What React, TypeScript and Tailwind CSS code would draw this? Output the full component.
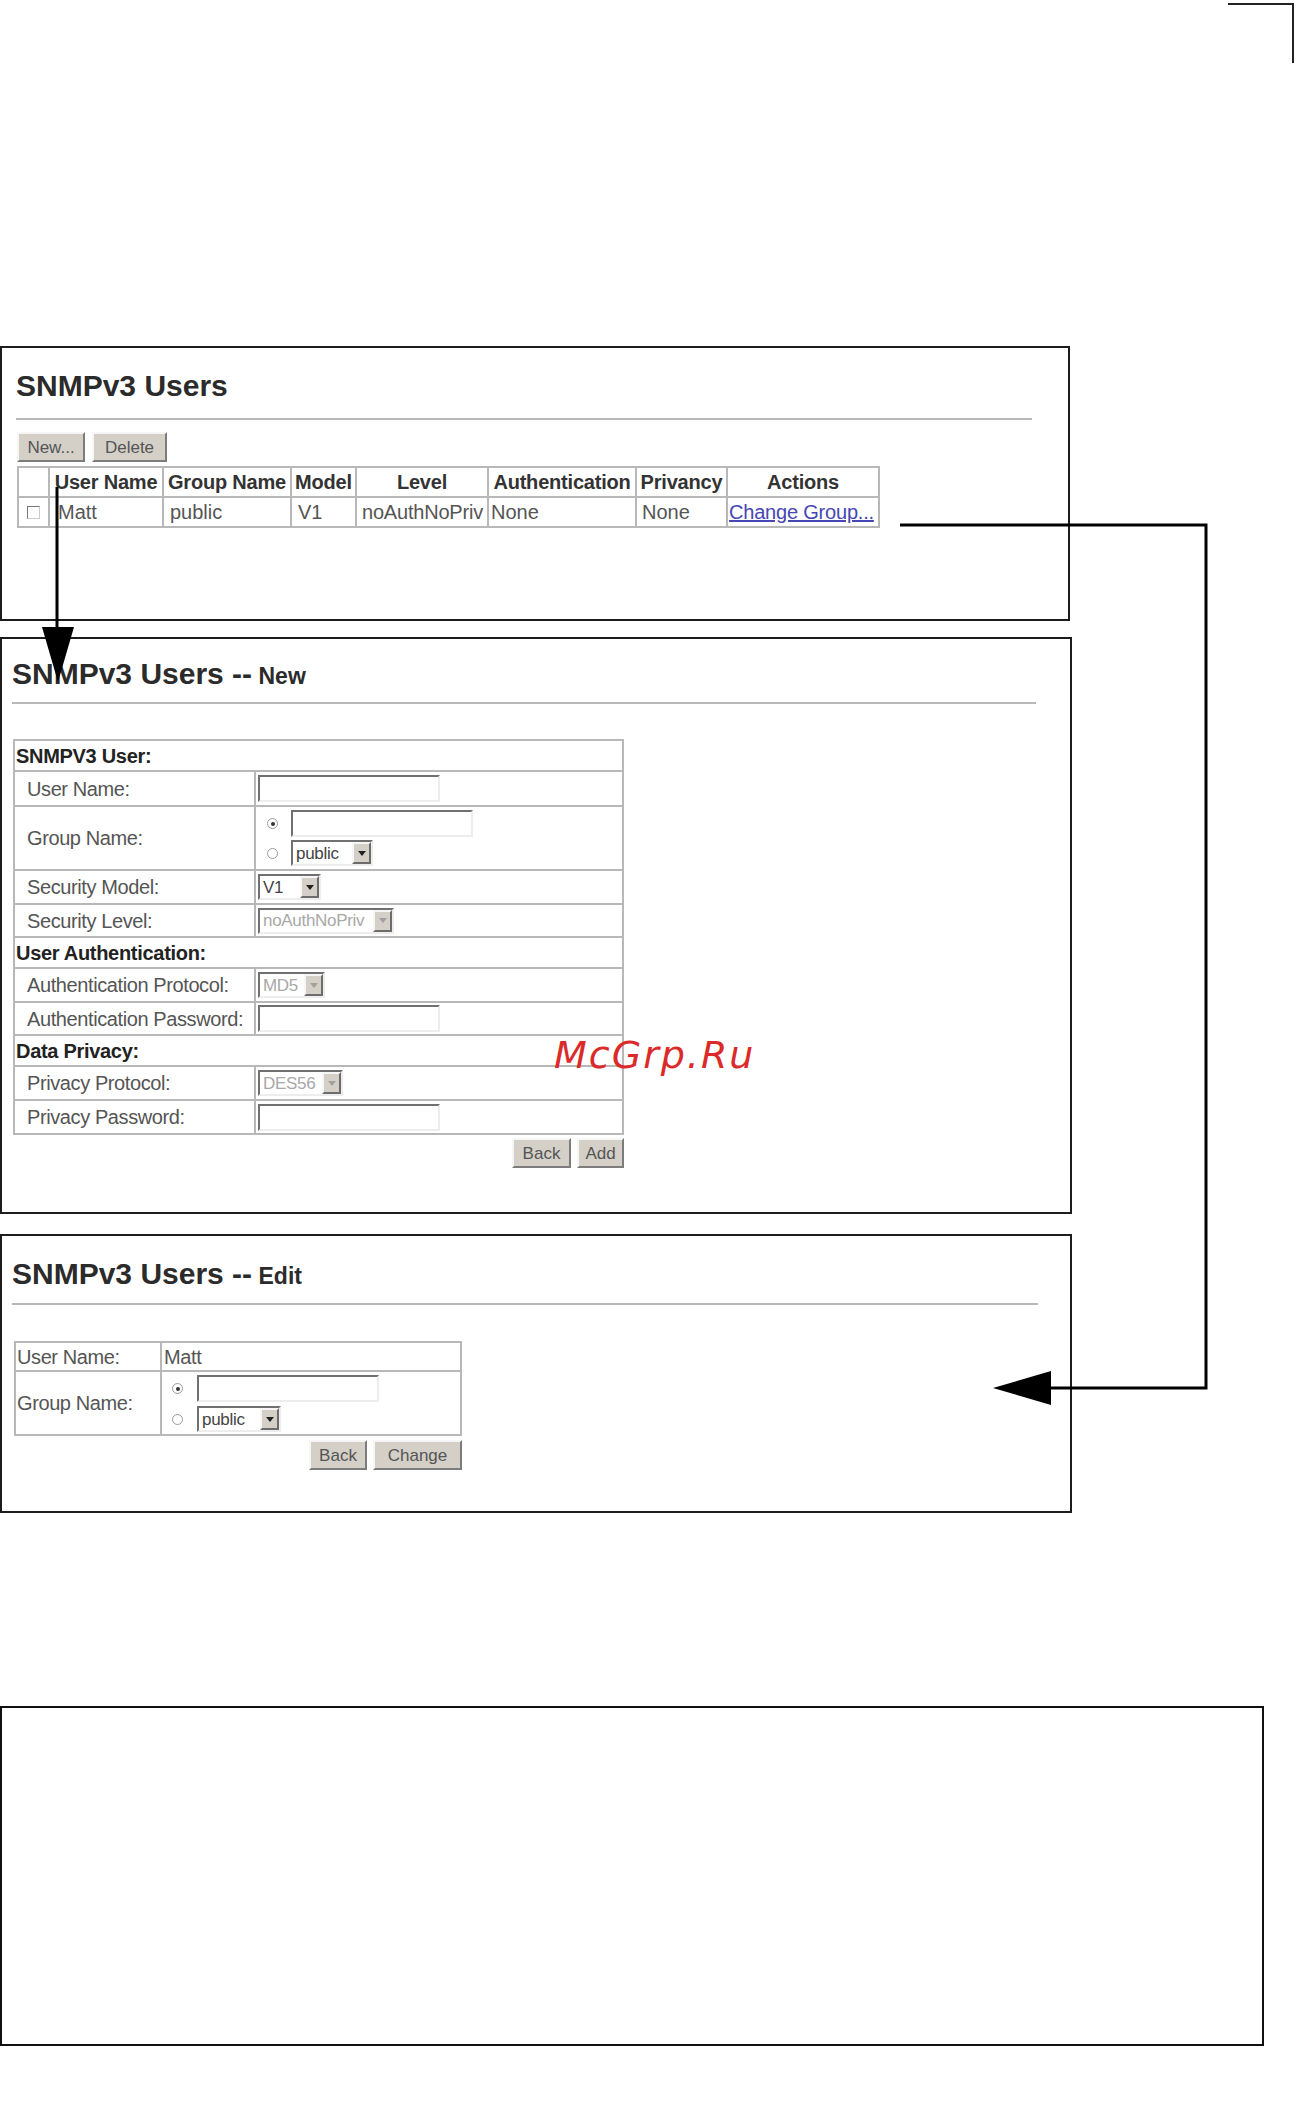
import React from 'react';

const LABEL = "text-[20px] text-[#555] tracking-[-0.4px] leading-none";
const SECTION = "text-[20px] font-bold text-[#222] tracking-[-0.3px] leading-none";

function Btn({ label, className }: { label: string; className: string }) {
  return (
    <div
      className={`${className} h-[30px] flex items-center justify-center bg-[#d4d0c8] border-2 border-t-[#f6f6f6] border-l-[#f6f6f6] border-b-[#7c7c7c] border-r-[#7c7c7c] text-[17px] text-[#555] leading-none`}
    >
      {label}
    </div>
  );
}

function TextBox() {
  return (
    <div className="w-[182px] h-[27px] bg-white border-2 border-t-[#707070] border-l-[#707070] border-b-[#ededed] border-r-[#ededed]" />
  );
}

function Select({ value, className, disabled }: { value: string; className: string; disabled?: boolean }) {
  return (
    <div
      className={`${className} h-[26px] flex bg-white border-2 border-t-[#707070] border-l-[#707070] border-b-[#ededed] border-r-[#ededed]`}
    >
      <span
        className={`flex-1 flex items-center pl-[3px] text-[17px] leading-none tracking-[-0.3px] ${disabled ? 'text-[#a8a8a8]' : 'text-[#444]'}`}
      >
        {value}
      </span>
      <span className="w-[19px] h-full flex items-center justify-center bg-[#d4d0c8] border-2 border-t-[#f6f6f6] border-l-[#f6f6f6] border-b-[#6c6c6c] border-r-[#6c6c6c]">
        <svg width="8" height="5" viewBox="0 0 8 5">
          <path d="M0 0 L8 0 L4 5 Z" fill={disabled ? '#a0a0a0' : '#222'} />
        </svg>
      </span>
    </div>
  );
}

function Radio({ checked }: { checked?: boolean }) {
  return (
    <span className="w-[11px] h-[11px] rounded-full border border-[#9a9a9a] bg-white flex items-center justify-center shrink-0">
      {checked && <span className="w-[4px] h-[4px] rounded-full bg-[#333]" />}
    </span>
  );
}

function Title({ sub }: { sub?: string }) {
  return (
    <div className="h-[30px] leading-[30px] whitespace-nowrap text-[#2b2b2b] font-bold">
      <span className="text-[30px]">SNMPv3 Users{sub ? ' --' : ''}</span>
      {sub && <span className="text-[23px]"> {sub}</span>}
    </div>
  );
}

function FormRow({ label, h, children }: { label: string; h: string; children: React.ReactNode }) {
  return (
    <div className={`${h} flex border-t-2 border-[#b8b8b8]`}>
      <div className={`w-[241px] shrink-0 border-r-2 border-[#b8b8b8] flex items-center pl-[12px] ${LABEL}`}>{label}</div>
      <div className="flex-1 flex items-center pl-[2px]">{children}</div>
    </div>
  );
}

function SectionRow({ label, h, first }: { label: string; h: string; first?: boolean }) {
  return (
    <div className={`${h} flex items-center pl-[1px] ${first ? '' : 'border-t-2 border-[#b8b8b8]'} ${SECTION}`}>{label}</div>
  );
}

const cols = ['w-[29px]', 'w-[114px]', 'w-[128px]', 'w-[65px]', 'w-[132px]', 'w-[148px]', 'w-[91px]', 'w-[152px]'];
const heads = ['', 'User Name', 'Group Name', 'Model', 'Level', 'Authentication', 'Privancy', 'Actions'];

function UsersTable() {
  return (
    <div className="w-[863px] border-2 border-[#b8b8b8]">
      <div className="h-[28px] flex">
        {heads.map((h, i) => (
          <div
            key={i}
            className={`${cols[i]} shrink-0 ${i ? 'border-l-2 border-[#b8b8b8]' : ''} flex items-center justify-center text-[20px] font-bold text-[#333] leading-none whitespace-nowrap tracking-[-0.2px]`}
          >
            {h}
          </div>
        ))}
      </div>
      <div className="h-[30px] flex border-t-2 border-[#b8b8b8] text-[20px] text-[#555] leading-none whitespace-nowrap">
        <div className={`${cols[0]} shrink-0 flex items-center justify-center`}>
          <span className="w-[13px] h-[13px] border border-[#777] bg-white border-b-[#ccc] border-r-[#ccc]" />
        </div>
        <div className={`${cols[1]} shrink-0 border-l-2 border-[#b8b8b8] flex items-center pl-[8px]`}>Matt</div>
        <div className={`${cols[2]} shrink-0 border-l-2 border-[#b8b8b8] flex items-center pl-[6px]`}>public</div>
        <div className={`${cols[3]} shrink-0 border-l-2 border-[#b8b8b8] flex items-center pl-[6px]`}>V1</div>
        <div className={`${cols[4]} shrink-0 border-l-2 border-[#b8b8b8] flex items-center pl-[5px] overflow-hidden tracking-[-0.2px]`}>noAuthNoPriv</div>
        <div className={`${cols[5]} shrink-0 border-l-2 border-[#b8b8b8] flex items-center pl-[2px]`}>None</div>
        <div className={`${cols[6]} shrink-0 border-l-2 border-[#b8b8b8] flex items-center pl-[5px]`}>None</div>
        <div className={`${cols[7]} shrink-0 border-l-2 border-[#b8b8b8] flex items-center pl-[1px] text-[#4646b4] underline tracking-[-0.2px]`}>Change Group...</div>
      </div>
    </div>
  );
}

export default function App() {
  return (
    <div className="relative w-[1296px] h-[2107px] bg-white overflow-hidden font-['Liberation_Sans',Arial,sans-serif]">
      {/* crop mark */}
      <div className="absolute left-[1228px] top-[3px] w-[66px] h-[60px] border-t-2 border-r-2 border-[#222]" />

      <div className="pt-[346px]">
        {/* list panel */}
        <div className="w-[1070px] h-[275px] border-2 border-[#1c1c1c] pl-[14px] pt-[23px]">
          <Title />
          <div className="mt-[17px] w-[1016px] h-[2px] bg-[#b8b8b8]" />
          <div className="mt-[12px] ml-[1px] flex gap-[7px]">
            <Btn label="New..." className="w-[68px]" />
            <Btn label="Delete" className="w-[75px]" />
          </div>
          <div className="mt-[4px] ml-[1px]">
            <UsersTable />
          </div>
        </div>

        {/* new panel */}
        <div className="mt-[16px] w-[1072px] h-[577px] border-2 border-[#1c1c1c] pl-[10px] pt-[20px]">
          <Title sub="New" />
          <div className="mt-[13px] w-[1024px] h-[2px] bg-[#b8b8b8]" />
          <div className="mt-[35px] ml-[1px] w-[611px] border-2 border-[#b8b8b8]">
            <SectionRow label="SNMPV3 User:" h="h-[29px]" first />
            <FormRow label="User Name:" h="h-[35px]">
              <TextBox />
            </FormRow>
            <FormRow label="Group Name:" h="h-[64px]">
              <div className="flex flex-col gap-[3px] self-start pt-[3px]">
                <div className="flex items-center">
                  <span className="ml-[9px] mr-[13px]"><Radio checked /></span>
                  <TextBox />
                </div>
                <div className="flex items-center">
                  <span className="ml-[9px] mr-[13px]"><Radio /></span>
                  <Select value="public" className="w-[82px]" />
                </div>
              </div>
            </FormRow>
            <FormRow label="Security Model:" h="h-[34px]">
              <Select value="V1" className="w-[63px]" />
            </FormRow>
            <FormRow label="Security Level:" h="h-[33px]">
              <Select value="noAuthNoPriv" className="w-[136px]" disabled />
            </FormRow>
            <SectionRow label="User Authentication:" h="h-[31px]" />
            <FormRow label="Authentication Protocol:" h="h-[34px]">
              <Select value="MD5" className="w-[67px]" disabled />
            </FormRow>
            <FormRow label="Authentication Password:" h="h-[33px]">
              <TextBox />
            </FormRow>
            <SectionRow label="Data Privacy:" h="h-[31px]" />
            <FormRow label="Privacy Protocol:" h="h-[34px]">
              <Select value="DES56" className="w-[85px]" disabled />
            </FormRow>
            <FormRow label="Privacy Password:" h="h-[34px]">
              <TextBox />
            </FormRow>
          </div>
          <div className="mt-[3px] ml-[1px] w-[611px] flex justify-end gap-[6px]">
            <Btn label="Back" className="w-[59px]" />
            <Btn label="Add" className="w-[47px]" />
          </div>
        </div>

        {/* edit panel */}
        <div className="mt-[20px] w-[1072px] h-[279px] border-2 border-[#1c1c1c] pl-[10px] pt-[23px]">
          <Title sub="Edit" />
          <div className="mt-[14px] w-[1026px] h-[2px] bg-[#b8b8b8]" />
          <div className="mt-[36px] ml-[2px] w-[448px] border-2 border-[#b8b8b8]">
            <div className="h-[27px] flex">
              <div className={`w-[146px] shrink-0 border-r-2 border-[#b8b8b8] flex items-center pl-[1px] ${LABEL}`}>User Name:</div>
              <div className={`flex-1 flex items-center pl-[2px] ${LABEL}`}>Matt</div>
            </div>
            <div className="h-[64px] flex border-t-2 border-[#b8b8b8]">
              <div className={`w-[146px] shrink-0 border-r-2 border-[#b8b8b8] flex items-center pl-[1px] ${LABEL}`}>Group Name:</div>
              <div className="flex-1 flex flex-col gap-[4px] pt-[3px]">
                <div className="flex items-center">
                  <span className="ml-[10px] mr-[14px]"><Radio checked /></span>
                  <TextBox />
                </div>
                <div className="flex items-center">
                  <span className="ml-[10px] mr-[14px]"><Radio /></span>
                  <Select value="public" className="w-[84px]" />
                </div>
              </div>
            </div>
          </div>
          <div className="mt-[4px] ml-[2px] w-[448px] flex justify-end gap-[6px]">
            <Btn label="Back" className="w-[58px]" />
            <Btn label="Change" className="w-[89px]" />
          </div>
        </div>

        {/* empty figure frame */}
        <div className="mt-[193px] w-[1264px] h-[340px] border-2 border-[#111]" />
      </div>

      {/* arrows */}
      <svg className="absolute left-0 top-0 pointer-events-none" width="1296" height="2107">
        <line x1="57" y1="487" x2="57" y2="630" stroke="#000" strokeWidth="3" />
        <path d="M42 627 L74 627 L58 682 Z" fill="#000" />
        <polyline points="900,525 1206,525 1206,1388 1048,1388" fill="none" stroke="#000" strokeWidth="3" />
        <path d="M1051 1371 L1051 1405 L993 1388 Z" fill="#000" />
      </svg>

      {/* watermark */}
      <div className="absolute left-[554px] top-[1036px] text-[38px] italic text-[#dc2a2a] tracking-[2px] font-['DejaVu_Sans',sans-serif] leading-none">
        McGrp.Ru
      </div>
    </div>
  );
}
